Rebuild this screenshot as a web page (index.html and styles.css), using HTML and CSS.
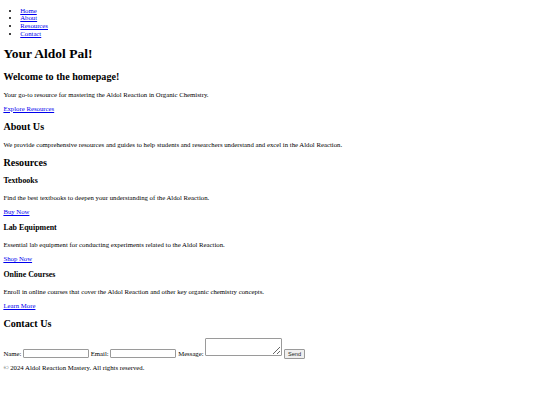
FILE: index.html
```html
<!DOCTYPE html>
<html>
<head>
<meta charset="utf-8">
<title>Your Aldol Pal!</title>
<link rel="stylesheet" href="styles.css">
</head>
<body class="page">
<nav class="nav">
  <ul class="nav-list">
    <li><a href="#home">Home</a></li>
    <li><a href="#about">About</a></li>
    <li><a href="#resources">Resources</a></li>
    <li><a href="#contact">Contact</a></li>
  </ul>
</nav>
<h1 class="title">Your Aldol Pal!</h1>
<section id="home">
  <h2 class="h2">Welcome to the homepage!</h2>
  <p class="p">Your go-to resource for mastering the Aldol Reaction in Organic Chemistry.</p>
  <a class="p link" href="#resources">Explore Resources</a>
</section>
<section id="about">
  <h2 class="h2">About Us</h2>
  <p class="p">We provide comprehensive resources and guides to help students and researchers understand and excel in the Aldol Reaction.</p>
</section>
<section id="resources">
  <h2 class="h2">Resources</h2>
  <h3 class="h3">Textbooks</h3>
  <p class="p">Find the best textbooks to deepen your understanding of the Aldol Reaction.</p>
  <a class="p link" href="#">Buy Now</a>
  <h3 class="h3">Lab Equipment</h3>
  <p class="p">Essential lab equipment for conducting experiments related to the Aldol Reaction.</p>
  <a class="p link" href="#">Shop Now</a>
  <h3 class="h3">Online Courses</h3>
  <p class="p">Enroll in online courses that cover the Aldol Reaction and other key organic chemistry concepts.</p>
  <a class="p link" href="#">Learn More</a>
</section>
<section id="contact">
  <h2 class="h2">Contact Us</h2>
  <form class="form">
    <label>Name:</label> <input class="field" type="text">
    <label>Email:</label> <input class="field" type="email">
    <label>Message:</label> <textarea class="area"></textarea>
    <button class="btn" type="button">Send</button>
  </form>
</section>
<footer class="footer">
  <p class="p footer-text">&copy; 2024 Aldol Reaction Mastery. All rights reserved.</p>
</footer>
</body>
</html>
```

FILE: styles.css
```css
html { background: #fff; }
.page {
  margin: 0 3.375px 3.375px;
  font-family: "Liberation Serif", "Times New Roman", serif;
  font-size: 6.75px;
  line-height: 7.6px;
  color: #000;
}
a { color: #0000ee; }
.nav-list {
  margin: 6.75px 0;
  padding-left: 16.875px;
  list-style: disc;
}
.title {
  font-size: 13.5px;
  line-height: 15.6px;
  margin: 9.045px 0;
  font-weight: bold;
}
.h2 {
  font-size: 10.125px;
  line-height: 11.4px;
  margin: 8.4px 0;
  font-weight: bold;
}
.h3 {
  font-size: 7.9px;
  line-height: 9.28px;
  margin: 7.9px 0;
  font-weight: bold;
}
.p { margin: 6.75px 0; }
.link { display: block; }
.form { margin: 0; }
.field {
  width: 62px;
  height: 5px;
  font-size: 5.6px;
  padding: 1px;
  border: 1px solid #9a9a9a;
  border-radius: 1px;
  box-sizing: content-box;
  vertical-align: baseline;
}
.area {
  width: 73px;
  height: 14px;
  font-size: 5.6px;
  padding: 1px;
  border: 1px solid #9a9a9a;
  border-radius: 1px;
  vertical-align: baseline;
  resize: both;
}
.btn {
  font-family: "Liberation Sans", Arial, sans-serif;
  font-size: 5.6px;
  line-height: 6px;
  padding: 1px 3px;
  border: 1px solid #9a9a9a;
  border-radius: 1px;
  background: #efefef;
  color: #222;
  vertical-align: baseline;
}
.footer-text { margin: 5px 0 6.75px; }
```
